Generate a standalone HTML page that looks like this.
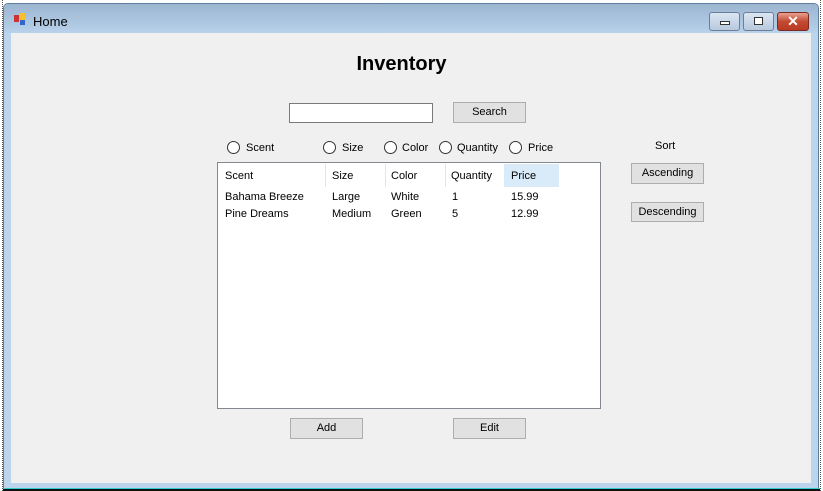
<!DOCTYPE html>
<html><head><style>
*{margin:0;padding:0;box-sizing:border-box}
body{width:823px;height:491px;background:#fff;position:relative;overflow:hidden;font-family:"Liberation Sans",sans-serif;font-size:11px;color:#000}
.a{position:absolute;white-space:nowrap}
.btn{position:absolute;background:#e1e1e1;border:1px solid #adadad;text-align:center;line-height:18px;font-size:11px}
.rad{position:absolute;width:13px;height:13px;border:1px solid #333;border-radius:50%;background:#fff}
.tb{position:absolute;width:31px;height:19px;border:1px solid #6d7f97;border-radius:3px;background:linear-gradient(#dbe6f3,#b7c9de)}
</style></head><body>
<div class="a" style="left:0;top:0;width:3px;height:491px;border-right:1px dotted #555"></div>
<div class="a" style="left:820px;top:0;width:3px;height:491px;border-left:1px dotted #555"></div>
<div class="a" style="left:3px;top:3px;width:816px;height:486px;background:#bcd4ec;border:1px solid #5f7d9d;border-radius:5px 5px 0 0"></div>
<div class="a" style="left:4px;top:4px;width:814px;height:29px;background:linear-gradient(#9bb6d2,#b9d1ea);border-radius:4px 4px 0 0"></div>
<div class="a" style="left:3px;top:488px;width:817px;height:3px;background:#111;border-top:1px solid #3cc"></div>
<div class="a" style="left:11px;top:33px;width:800px;height:450px;background:#f0f0f0"></div>
<div class="a" style="left:14px;top:15px;width:5px;height:7px;background:#c33"></div>
<div class="a" style="left:19px;top:13px;width:6px;height:8px;background:#f4c030"></div>
<div class="a" style="left:20px;top:20px;width:5px;height:5px;background:#36c"></div>
<div class="a" style="left:33px;top:14px;font-size:13px">Home</div>
<div class="tb" style="left:709px;top:12px"><div class="a" style="left:10px;top:8px;width:10px;height:4px;border:1px solid #333;background:#fff"></div></div>
<div class="tb" style="left:743px;top:12px"><div class="a" style="left:10px;top:4px;width:9px;height:8px;border:1px solid #333;background:#fff"></div></div>
<div class="a" style="left:777px;top:12px;width:32px;height:19px;border:1px solid #7a2a20;border-radius:3px;background:linear-gradient(#e8a090,#c44a32 50%,#b83a24);color:#fff;font-weight:bold;font-size:14px;text-align:center;line-height:16px">✕</div>
<div class="a" style="left:0;width:823px;top:53px;text-align:center;font-size:20px;font-weight:bold;text-indent:-20px">Inventory</div>
<div class="a" style="left:289px;top:103px;width:144px;height:20px;background:#fff;border:1px solid #7a7a7a"></div>
<div class="btn" style="left:453px;top:102px;width:73px;height:21px">Search</div>
<div class="rad" style="left:227px;top:141px"></div><div class="a" style="left:246px;top:142px">Scent</div>
<div class="rad" style="left:323px;top:141px"></div><div class="a" style="left:342px;top:142px">Size</div>
<div class="rad" style="left:384px;top:141px"></div><div class="a" style="left:402px;top:142px">Color</div>
<div class="rad" style="left:439px;top:141px"></div><div class="a" style="left:457px;top:142px">Quantity</div>
<div class="rad" style="left:509px;top:141px"></div><div class="a" style="left:528px;top:142px">Price</div>
<div class="a" style="left:655px;top:140px">Sort</div>
<div class="btn" style="left:631px;top:163px;width:73px;height:21px">Ascending</div>
<div class="btn" style="left:631px;top:202px;width:73px;height:20px">Descending</div>
<div class="a" style="left:217px;top:162px;width:384px;height:247px;background:#fff;border:1px solid #828790"></div>
<div class="a" style="left:504px;top:164px;width:55px;height:23px;background:#d9ebf9"></div>
<div class="a" style="left:325px;top:164px;width:1px;height:23px;background:#e5e5e5"></div>
<div class="a" style="left:385px;top:164px;width:1px;height:23px;background:#e5e5e5"></div>
<div class="a" style="left:445px;top:164px;width:1px;height:23px;background:#e5e5e5"></div>
<div class="a" style="left:225px;top:170px">Scent</div><div class="a" style="left:332px;top:170px">Size</div><div class="a" style="left:391px;top:170px">Color</div><div class="a" style="left:451px;top:170px">Quantity</div><div class="a" style="left:511px;top:170px">Price</div>
<div class="a" style="left:225px;top:191px">Bahama Breeze</div><div class="a" style="left:332px;top:191px">Large</div><div class="a" style="left:391px;top:191px">White</div><div class="a" style="left:452px;top:191px">1</div><div class="a" style="left:511px;top:191px">15.99</div>
<div class="a" style="left:225px;top:208px">Pine Dreams</div><div class="a" style="left:332px;top:208px">Medium</div><div class="a" style="left:391px;top:208px">Green</div><div class="a" style="left:452px;top:208px">5</div><div class="a" style="left:511px;top:208px">12.99</div>
<div class="btn" style="left:290px;top:418px;width:73px;height:21px">Add</div>
<div class="btn" style="left:453px;top:418px;width:73px;height:21px">Edit</div>
</body></html>
